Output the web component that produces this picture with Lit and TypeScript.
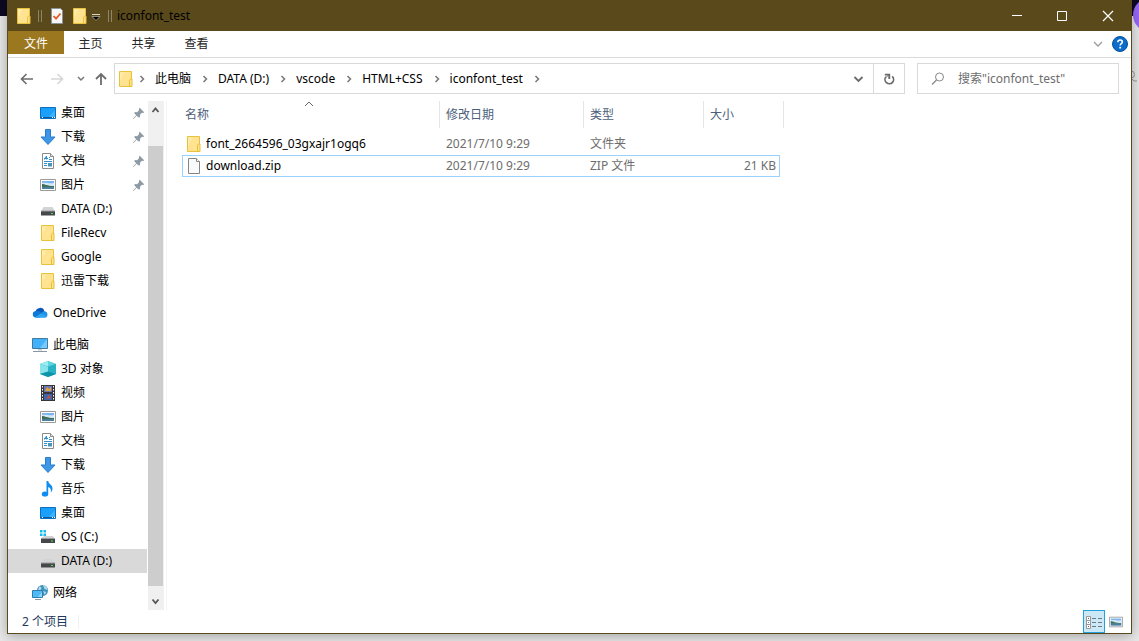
import { LitElement, html, css, svg, nothing, type TemplateResult } from "lit";
import { customElement, property, state } from "lit/decorators.js";
import { classMap } from "lit/directives/class-map.js";

const folder = svg`
  <path d="M1.5 .5h12v15h-12z" fill="#ffe391" stroke="#e9c23c"/>
  <path d="M2 1h5l-5 9z" fill="#ffeaa6"/>
  <path d="M11.500 15.500V9.500l1-1.500h1.500v7.500z" fill="#ffe28a" stroke="#e9bf36"/>`;

const picture = svg`
  <path d="M.5 2.500h15v11H.5z" fill="#fff" stroke="#9a9a9a"/>
  <path d="M2 4h12v8H2z" fill="#7db4ee"/>
  <path d="M2 6c4-1 7 1 12 0v3H2z" fill="#d4e9f7"/>
  <path d="M2 7c3 0 5 2 12 2v1H2z" fill="#3f6f58"/>
  <path d="M2 10h12v2H2z" fill="#4d7f9b"/>`;

const drive = svg`
  <path d="M3.500 6h9L15 10.500H1z" fill="#d3d4d6"/>
  <path d="M1 10h14v4.500H1z" fill="#45484b"/>
  <path d="M1 10h14" stroke="#9b9da0"/>
  <path d="M11 12h2v1h-2z" fill="#57e05b"/>`;

const icons: Record<string, TemplateResult> = {
  folder,
  picture,
  drive,
  desktop: svg`
    <path d="M.5 2.500h15v11H.5z" fill="#1aa0fb" stroke="#0b6fc0"/>
    <path d="M8 13L15 5v8z" fill="#3fb1ff"/>
    <path d="M1 12.500h14" stroke="#0b5c9e"/>
    <path d="M2 12.500h1m9 0h1m1 0h1" stroke="#fff"/>`,
  download: svg`<path d="M5.500.5h5v7.500h4.500L8 15.500 1 8h4.500z" fill="#3d96e6" stroke="#2a7ccb"/>`,
  document: svg`
    <path d="M2.500.5h8l3 3v12h-11z" fill="#fff" stroke="#8b8b8b"/>
    <path d="M10.500.5v3h3" fill="#e4e4e4" stroke="#8b8b8b"/>
    <path d="M4.500 6.500L6.500 3v3.500M4 5.500h4M9 4.500h1M9 6.500h3M4 8.500h8M4 10.500h3m-3 2h3" fill="none" stroke="#2c8fd4"/>
    <path d="M8 10h4v3.500H8z" fill="#4d93b8"/>`,
  cloud: svg`
    <g transform="translate(0 -1)">
      <path d="M3.500 8a4.600 4.600 0 0 1 9-.8L9 11z" fill="#0a57b4"/>
      <path d="M3.500 13.500a3.300 3.300 0 0 1 0-6.500c3-.7 5 1 7 2.500L8 13.500z" fill="#0f78d4"/>
      <path d="M12 7.200a3.200 3.200 0 0 1 1 6.300H3.500L9 9.500c1-1.300 2-2 3-2.300z" fill="#1f92e6"/>
      <path d="M2.500 13.400L9 9.500l6.300 3-1.800 1h-10z" fill="#2ba5f0"/>
    </g>`,
  computer: svg`
    <path d="M.5 1.500h15v10H.5z" fill="#43b1fa" stroke="#417a9f"/>
    <path d="M8 11L15 2v9z" fill="#76caff"/>
    <path d="M6 12h4v1.500H6z" fill="#c5ccd1"/>
    <path d="M1 14.500h14" stroke="#8797a3"/>`,
  cube: svg`
    <path d="M0 3l8-3 8 3v10l-8 3-8-3z" fill="#36bfd0"/>
    <path d="M0 3l8-3v5.500z" fill="#9becf1"/>
    <path d="M16 3L8 0v5.500z" fill="#5fd3de"/>
    <path d="M0 3l8 3v5l-8 2z" fill="#8ae3ea"/>
    <path d="M16 3L8 6v5l8 2z" fill="#2ab1c4"/>
    <path d="M0 13l8-2.500L16 13l-8 3z" fill="#0f93a8"/>`,
  video: svg`
    <path d="M1 0h14v16H1z" fill="#39363b"/>
    <path d="M4 1h8v6H4z" fill="#6c79b9"/><path d="M4 9h8v6H4z" fill="#3e65ad"/>
    <path d="M5 6l2-4 2 2 2-2v4z" fill="#e0a43a"/><path d="M6 14l3-4 2 3z" fill="#d14d35"/>
    <path d="M2.500 1v14M13.500 1v14" stroke="#fff" stroke-dasharray="1.500 1.500"/>`,
  music: svg`
    <ellipse cx="5" cy="13" rx="3.200" ry="2.600" fill="#0f8cf0"/>
    <path d="M6.500 0h1.700c.3 3 4.300 3.500 4.300 7.500 0 1.800-.7 3-1.700 4 .6-3-.3-4.500-2.600-5.500V13H6.500z" fill="#0f8cf0"/>`,
  system: svg`
    <path d="M0 1h2.500v2.500H0zM3.500 1H6v2.500H3.500zM0 4.500h2.500V7H0zM3.500 4.500H6V7H3.500z" fill="#11b9ee"/>
    <path d="M5 7h8l2 3H1l1-2z" fill="#cfd1d3"/>
    <path d="M1 10h14v4H1z" fill="#45484b"/><path d="M1 9.500h14" stroke="#9b9da0"/>
    <path d="M11 11.500h2v1h-2z" fill="#57e05b"/>`,
  network: svg`
    <circle cx="10.500" cy="5.500" r="5.500" fill="#3f93bf"/>
    <path d="M7 1.500c2 0 3 1 2 3L6 6zM11 0c3 1 4 2 4.500 5l-3-1zM11 6l3 1-1 3z" fill="#b5dbe8"/>
    <path d="M.5 5.500h10v7H.5z" fill="#4fb9f6" stroke="#2c7fad"/>
    <path d="M6 12l4-5v5z" fill="#8bd5ff"/>
    <path d="M3 14.500h6" stroke="#8797a3"/>`,
  checkDoc: svg`
    <path d="M1.500.5h9l2 2v13h-11z" fill="#f7f7f7" stroke="#8a929b"/>
    <path d="M3.500 8l2.500 2.700L10.500 5.500" fill="none" stroke="#e25c26" stroke-width="1.800"/>`,
  file: svg`
    <path d="M2.500.5h8l3 3v12h-11z" fill="#f9fafb" stroke="#858585"/>
    <path d="M10.500.5v3h3" fill="#fff" stroke="#858585"/>`,
  pin: svg`
    <path d="M10 2l5 5-1 1-1.500-.4-2.300 2.300.2 2.300-1.200 1.200L6.500 11 3 14.500l-.8.3.3-.8L6 10.500 3.600 8l1.200-1.200 2.300.2L9.400 4.700 9 3z" fill="#8d99a5"/>`,
  back: svg`<path d="M14 8H3M7.500 3L2.500 8l5 5" fill="none" stroke="#6d6d6d" stroke-width="1.600"/>`,
  forward: svg`<path d="M2 8h11M8.500 3l5 5-5 5" fill="none" stroke="#d6d6d6" stroke-width="1.600"/>`,
  up: svg`<path d="M8 14V3M3 8l5-5 5 5" fill="none" stroke="#6d6d6d" stroke-width="1.800"/>`,
  smallDown: svg`<path d="M5 6l3 3 3-3" fill="none" stroke="#777" stroke-width="1.500"/>`,
  down: svg`<path d="M4.500 6L8.500 10l4-4" fill="none" stroke="#6b6b6b" stroke-width="1.800"/>`,
  thinDown: svg`<path d="M4 6l4 4 4-4" fill="none" stroke="#9c9c9c" stroke-width="1.300"/>`,
  scrollUp: svg`<path d="M4.500 10l3-3.500 3 3.500" fill="none" stroke="#555" stroke-width="1.800"/>`,
  scrollDown: svg`<path d="M4.500 5.500L7.500 9l3-3.500" fill="none" stroke="#555" stroke-width="1.800"/>`,
  sort: svg`<path d="M4 10l4-4 4 4" fill="none" stroke="#666"/>`,
  crumb: svg`<path d="M6.500 5l3 3-3 3" fill="none" stroke="#777" stroke-width="1.500"/>`,
  refresh: svg`
    <path d="M5 5.700a4.300 4.300 0 1 0 6.200-.4" fill="none" stroke="#6b6b6b" stroke-width="1.700"/>
    <path d="M3.800 3.600h4.600V8" fill="none" stroke="#6b6b6b" stroke-width="1.600"/>
    <path d="M8 7.800V3.500L5 6.500" fill="none" stroke="#6b6b6b"/>`,
  search: svg`<circle cx="9.500" cy="6" r="4" fill="none" stroke="#888"/><path d="M6.500 9L2 13.500" stroke="#888" stroke-width="1.200"/>`,
  customize: svg`<path d="M4 6.500h8" stroke="#d8d2c0"/><path d="M4 8.500h8L8 12.500z" fill="#000" stroke="#d8d2c0" stroke-width=".6"/>`,
  minimize: svg`<path d="M4 7.500h10" stroke="#fff"/>`,
  maximize: svg`<path d="M3.500 3.500h9v9h-9z" fill="none" stroke="#fff"/>`,
  close: svg`<path d="M3 3l10 10M13 3L3 13" stroke="#fff" stroke-width="1.200"/>`,
  help: svg`
    <circle cx="8" cy="8" r="7.500" fill="#0a6ccb" stroke="#0b4f96"/>
    <path d="M5.800 6.200c0-1.400 1-2.200 2.300-2.200s2.200.8 2.200 2c0 1.600-2.100 1.700-2.100 3.400" fill="none" stroke="#fff" stroke-width="1.600"/>
    <path d="M7.300 10.800h1.800v1.700H7.300z" fill="#fff"/>`,
  details: svg`
    <path d="M.5 2.500h4v12h-4zM.5 6.500h4M.5 10.500h4" fill="#fff" stroke="#999"/>
    <path d="M6 4.500h4m2 0h4M6 8.500h4m2 0h4M6 12.500h4m2 0h4" stroke="#6f7a80"/>
    <path d="M2 4h1v1H2z" fill="#555"/><path d="M2 8h1v1H2z" fill="#4a8ad0"/><path d="M2 12h1v1H2z" fill="#c33"/>`,
  person: svg`<circle cx="6" cy="5.500" r="3.500" fill="none" stroke="#999"/><path d="M3 13l3-4 3 3h3" fill="none" stroke="#999"/>`,
};

@customElement("ui-icon")
class UiIcon extends LitElement {
  @property() name = "";
  static styles = css`
    :host { display: block; flex: none; width: 16px; height: 16px; }
    svg { display: block; width: 100%; height: 100%; }
  `;
  render() {
    return html`<svg viewBox="0 0 16 16" aria-hidden="true">${icons[this.name] ?? nothing}</svg>`;
  }
}

interface NavItem { icon: string; label: string; root?: boolean; pinned?: boolean; id: string }

const navGroups: NavItem[][] = [
  [
    { id: "q1", icon: "desktop", label: "桌面", pinned: true },
    { id: "q2", icon: "download", label: "下载", pinned: true },
    { id: "q3", icon: "document", label: "文档", pinned: true },
    { id: "q4", icon: "picture", label: "图片", pinned: true },
    { id: "q5", icon: "drive", label: "DATA (D:)" },
    { id: "q6", icon: "folder", label: "FileRecv" },
    { id: "q7", icon: "folder", label: "Google" },
    { id: "q8", icon: "folder", label: "迅雷下载" },
  ],
  [{ id: "od", icon: "cloud", label: "OneDrive", root: true }],
  [
    { id: "pc", icon: "computer", label: "此电脑", root: true },
    { id: "p1", icon: "cube", label: "3D 对象" },
    { id: "p2", icon: "video", label: "视频" },
    { id: "p3", icon: "picture", label: "图片" },
    { id: "p4", icon: "document", label: "文档" },
    { id: "p5", icon: "download", label: "下载" },
    { id: "p6", icon: "music", label: "音乐" },
    { id: "p7", icon: "desktop", label: "桌面" },
    { id: "p8", icon: "system", label: "OS (C:)" },
    { id: "p9", icon: "drive", label: "DATA (D:)" },
  ],
  [{ id: "nw", icon: "network", label: "网络", root: true }],
];

const files = [
  { icon: "folder", name: "font_2664596_03gxajr1ogq6", date: "2021/7/10 9:29", type: "文件夹", size: "" },
  { icon: "file", name: "download.zip", date: "2021/7/10 9:29", type: "ZIP 文件", size: "21 KB" },
];

const crumbs = ["此电脑", "DATA (D:)", "vscode", "HTML+CSS", "iconfont_test"];

@customElement("app-root")
class AppRoot extends LitElement {
  @state() private selectedNav = "p9";
  @state() private focusedFile = "download.zip";

  static styles = css`
    :host {
      display: flex;
      box-sizing: border-box;
      min-height: 100vh;
      padding: 0 7px 7px;
      position: relative;
      overflow: hidden;
      background: linear-gradient(#0c0922 16px, #e8e8e8 16px);
      color: #000;
      font: 12px/20px "Noto Sans", "Noto Sans CJK SC", sans-serif;
    }
    * { box-sizing: border-box; }
    button, input { font: inherit; color: inherit; border: 0; padding: 0; margin: 0; background: none; }
    button { display: flex; align-items: center; justify-content: center; }
    a { color: inherit; text-decoration: none; }
    .badge { position: absolute; top: -2px; right: -28px; width: 34px; height: 34px; border-radius: 50%; background: #9a68f8; }
    .behind { position: absolute; top: 69px; right: -2px; }
    .window {
      flex: 1;
      min-width: 0;
      display: flex;
      flex-direction: column;
      position: relative;
      background: #fff;
      border: 1px solid #5a4a1b;
      border-top: 0;
      box-shadow: 0 2px 12px rgba(0, 0, 0, .3);
    }
    .titlebar { display: flex; align-items: center; height: 31px; background: #5a4a1b; padding-left: 8px; }
    .quick { display: flex; align-items: center; }
    .check { margin-right: 6px; }
    .bars { width: 4px; height: 12px; margin: 0 8px 0 6px; border: solid #8f8567; border-width: 0 1px; }
    .bars.end { margin: 0 5px 0 4px; }
    .title { flex: 1; font-weight: 400; }
    .control { width: 46px; height: 31px; }
    .ribbon { display: flex; height: 27px; border-bottom: 1px solid #dadbdc; }
    .tab { width: 53px; height: 23px; padding-top: 2px; color: #262626; }
    .tab.file { width: 56px; background: #9b7820; color: #fff; }
    .ribbon-end { margin-left: auto; display: flex; gap: 6px; align-items: center; padding-right: 3px; }
    .navbar { display: flex; align-items: center; padding: 5px 12px 7px 11px; }
    .arrows { display: flex; width: 95px; gap: 14px; align-items: center; }
    .arrows .recent { margin: 0 -10px 0 -6px; }
    .address { flex: 1; display: flex; height: 31px; border: 1px solid #d9d9d9; align-items: center; padding-left: 3px; }
    .crumbs { display: flex; align-items: center; flex: 1; margin: 0; padding: 0; list-style: none; }
    .crumbs li { display: flex; align-items: center; white-space: nowrap; }
    .crumbs ui-icon { margin: 0 5px 0 6px; }
    .crumbs .start ui-icon { margin: 0; }
    .crumbs .start { padding-right: 5px; }
    .drop { width: 30px; height: 29px; }
    .refresh { width: 31px; height: 29px; border-left: 1px solid #d9d9d9; }
    .search { display: flex; align-items: center; gap: 12px; width: 202px; height: 31px; margin-left: 12px; padding-left: 12px; border: 1px solid #d9d9d9; }
    .search input { flex: 1; min-width: 0; height: 24px; outline: 0; }
    .search input::placeholder { color: #6d6d6d; opacity: 1; }
    .content { flex: 1; display: flex; min-height: 0; }
    .tree { width: 140px; display: flex; flex-direction: column; gap: 8px; }
    .tree ul { list-style: none; margin: 0; padding: 0; }
    .node { display: flex; align-items: center; gap: 5px; height: 24px; margin-right: 1px; padding: 0 2px 0 32px; }
    .node.root { padding-left: 24px; }
    .node.selected { background: #d9d9d9; }
    .node .pin { width: 14px; height: 14px; margin-left: auto; }
    .scroll { width: 16px; display: flex; flex-direction: column; background: #f0f0f0; }
    .scroll button { width: 16px; height: 17px; }
    .track { flex: 1; padding-top: 28px; padding-bottom: 7px; display: flex; }
    .thumb { width: 15px; background: #cdcdcd; }
    .files { flex: 1; min-width: 0; margin-left: 2px; padding-left: 15px; border-left: 1px solid #f4f4f4; }
    table { width: 602px; table-layout: fixed; border-collapse: separate; border-spacing: 0; }
    .c-name { width: 258px; }
    .c-date { width: 144px; }
    .c-type { width: 120px; }
    .c-size { width: 76px; }
    .c-gap { width: 4px; }
    th { position: relative; height: 27px; padding: 0 0 0 6px; text-align: left; font-weight: 400; color: #4c607a; border-right: 1px solid #e5e5e5; }
    th:first-child { padding-left: 3px; }
    .sort { position: absolute; top: -5px; left: 119px; }
    td { height: 22px; padding: 0 0 0 6px; color: #6d6d6d; line-height: 20px; border: 1px solid transparent; border-width: 1px 0; }
    td:first-child { padding-left: 3px; border-left-width: 1px; color: #000; }
    td:last-child { border-right-width: 1px; text-align: right; padding-right: 3px; }
    .spacer { height: 5px; }
    .focused td { border-color: #99d1ff; }
    .name { display: flex; align-items: center; gap: 4px; }
    .status { display: flex; align-items: center; height: 23px; padding-left: 14px; color: #1e395b; }
    .count { padding-right: 10px; border-right: 1px solid #f1f1f1; line-height: 14px; }
    .views { margin-left: auto; display: flex; padding-right: 4px; }
    .view { width: 22px; height: 23px; }
    .view.on { background: #cbe8f6; border: 1px solid #26a0da; }
    .view.large ui-icon { width: 14px; height: 14px; }
  `;

  private renderNode(item: NavItem) {
    return html`<li>
      <a href="#${item.id}" class=${classMap({ node: true, root: !!item.root, selected: this.selectedNav === item.id })}
        @click=${(e: Event) => { e.preventDefault(); this.selectedNav = item.id; }}>
        <ui-icon name=${item.icon}></ui-icon><span>${item.label}</span>
        ${item.pinned ? html`<ui-icon class="pin" name="pin"></ui-icon>` : nothing}
      </a>
    </li>`;
  }

  render() {
    return html`
      <div class="badge"></div>
      <ui-icon class="behind" name="person"></ui-icon>
      <main class="window">
        <header class="titlebar">
          <ui-icon name="folder"></ui-icon>
          <span class="bars"></span>
          <div class="quick">
            <button class="check" aria-label="属性"><ui-icon name="checkDoc"></ui-icon></button>
            <button aria-label="新建文件夹"><ui-icon name="folder"></ui-icon></button>
            <button aria-label="自定义快速访问工具栏"><ui-icon name="customize"></ui-icon></button>
          </div>
          <span class="bars end"></span>
          <span class="title">iconfont_test</span>
          <button class="control" aria-label="最小化"><ui-icon name="minimize"></ui-icon></button>
          <button class="control" aria-label="最大化"><ui-icon name="maximize"></ui-icon></button>
          <button class="control" aria-label="关闭"><ui-icon name="close"></ui-icon></button>
        </header>
        <nav class="ribbon">
          <button class="tab file">文件</button>
          <button class="tab">主页</button>
          <button class="tab">共享</button>
          <button class="tab">查看</button>
          <div class="ribbon-end">
            <button aria-label="展开功能区"><ui-icon name="thinDown"></ui-icon></button>
            <button aria-label="帮助"><ui-icon name="help"></ui-icon></button>
          </div>
        </nav>
        <div class="navbar">
          <div class="arrows">
            <button aria-label="返回"><ui-icon name="back"></ui-icon></button>
            <button aria-label="前进" disabled><ui-icon name="forward"></ui-icon></button>
            <button class="recent" aria-label="最近浏览的位置"><ui-icon name="smallDown"></ui-icon></button>
            <button aria-label="向上"><ui-icon name="up"></ui-icon></button>
          </div>
          <div class="address">
            <ol class="crumbs">
              <li class="start"><ui-icon name="folder"></ui-icon><ui-icon name="crumb"></ui-icon></li>
              ${crumbs.map((c) => html`<li><a href="#">${c}</a><ui-icon name="crumb"></ui-icon></li>`)}
            </ol>
            <button class="drop" aria-label="以前的位置"><ui-icon name="down"></ui-icon></button>
            <button class="refresh" aria-label="刷新"><ui-icon name="refresh"></ui-icon></button>
          </div>
          <label class="search">
            <ui-icon name="search"></ui-icon>
            <input type="text" aria-label="搜索" placeholder='搜索"iconfont_test"' />
          </label>
        </div>
        <div class="content">
          <nav class="tree">
            ${navGroups.map((g) => html`<ul>${g.map((i) => this.renderNode(i))}</ul>`)}
          </nav>
          <div class="scroll">
            <button aria-label="向上滚动"><ui-icon name="scrollUp"></ui-icon></button>
            <div class="track"><div class="thumb"></div></div>
            <button aria-label="向下滚动"><ui-icon name="scrollDown"></ui-icon></button>
          </div>
          <section class="files">
            <table>
              <colgroup>
                <col class="c-name" /><col class="c-date" /><col class="c-type" /><col class="c-size" /><col class="c-gap" />
              </colgroup>
              <thead>
                <tr>
                  <th>名称<ui-icon class="sort" name="sort"></ui-icon></th>
                  <th>修改日期</th>
                  <th>类型</th>
                  <th colspan="2">大小</th>
                </tr>
                <tr class="spacer"></tr>
              </thead>
              <tbody>
                ${files.map((f) => html`
                  <tr class=${classMap({ focused: this.focusedFile === f.name })} @click=${() => (this.focusedFile = f.name)}>
                    <td><span class="name"><ui-icon name=${f.icon}></ui-icon>${f.name}</span></td>
                    <td>${f.date}</td>
                    <td>${f.type}</td>
                    <td>${f.size}</td>
                  </tr>`)}
              </tbody>
            </table>
          </section>
        </div>
        <footer class="status">
          <span class="count">2 个项目</span>
          <div class="views">
            <button class="view on" aria-label="详细信息"><ui-icon name="details"></ui-icon></button>
            <button class="view large" aria-label="大图标"><ui-icon name="picture"></ui-icon></button>
          </div>
        </footer>
      </main>
    `;
  }
}
